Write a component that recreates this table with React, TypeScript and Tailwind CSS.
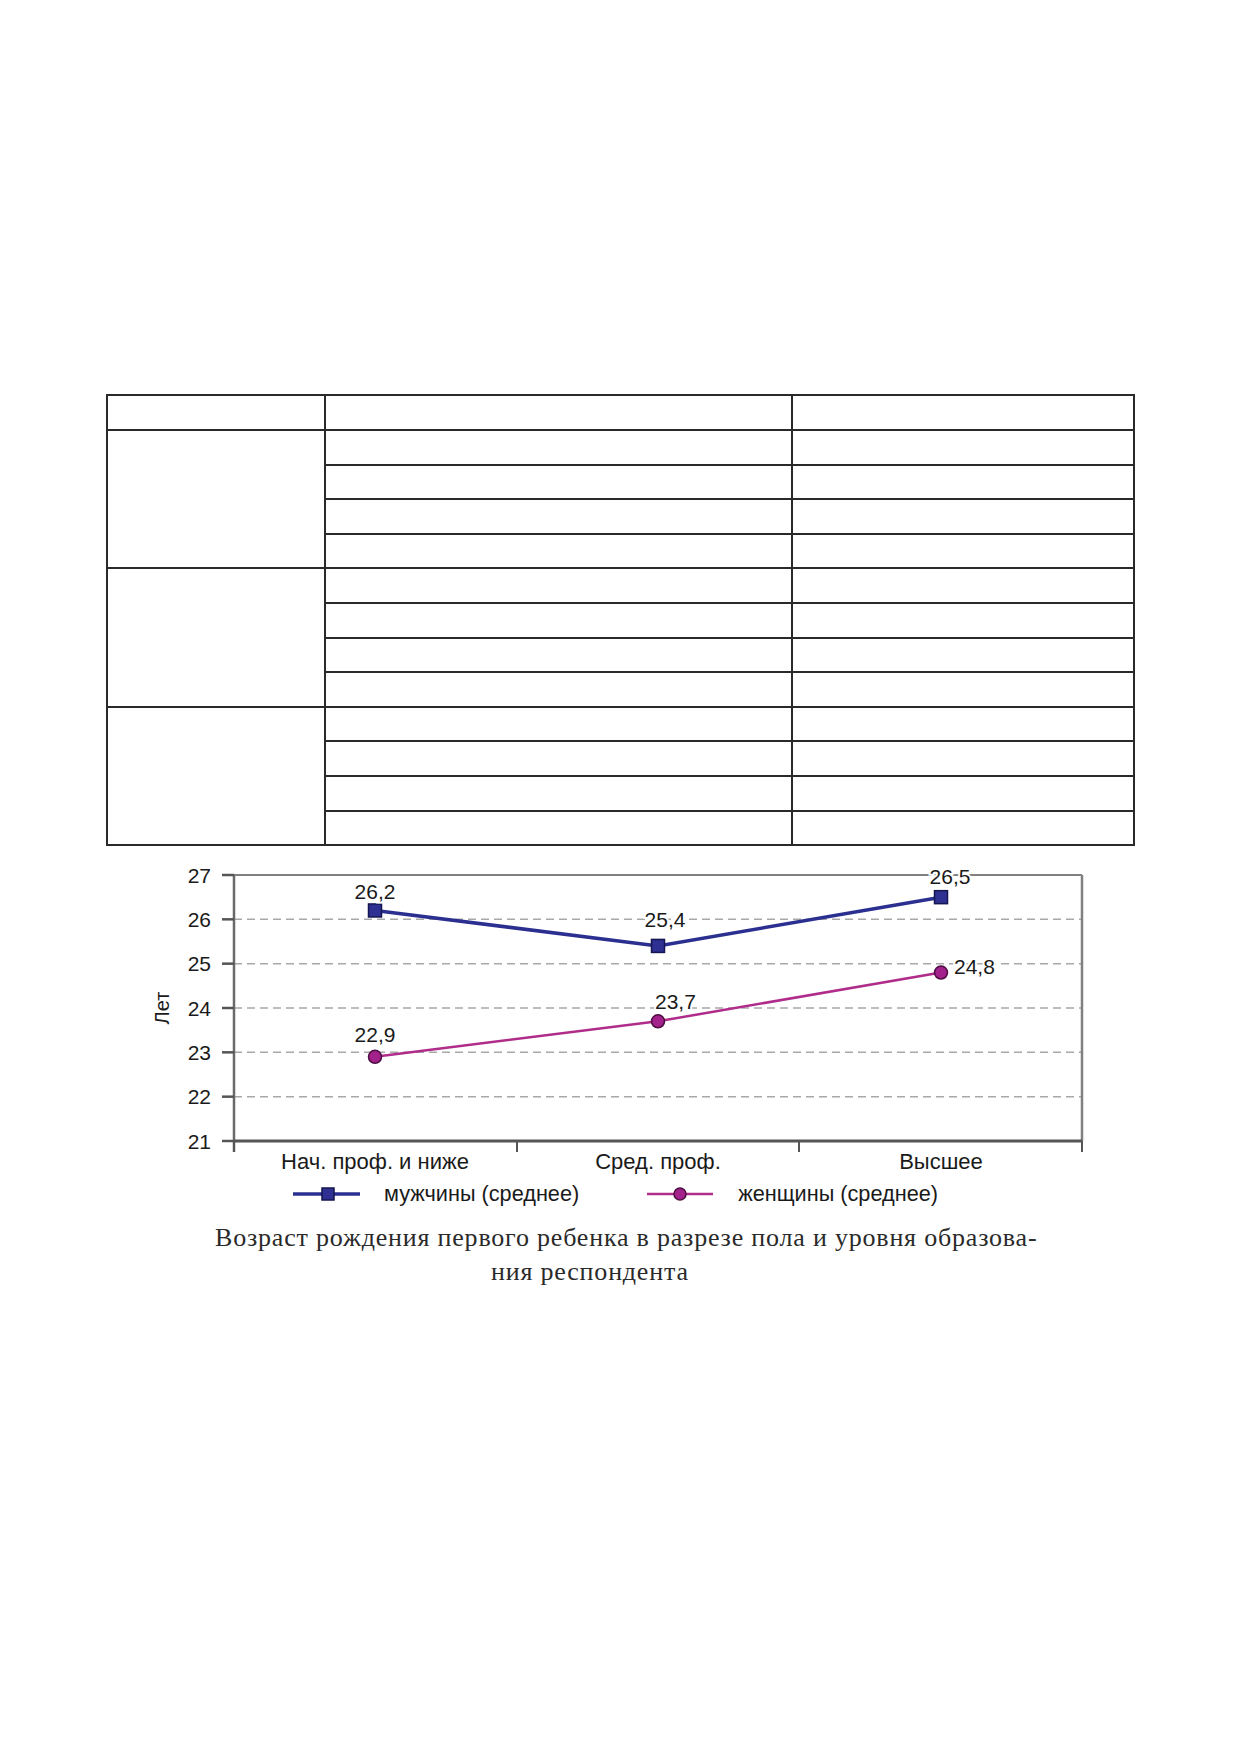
import React from 'react';

// chart geometry (svg coords; svg sits at page x=130, y~847)
const PLOT = { left: 104, right: 952, top: 26, bottom: 292 };
const yOf = (v: number) => PLOT.top + (27 - v) * ((PLOT.bottom - PLOT.top) / 6);
const xs = [245, 528, 811];

const male = [26.2, 25.4, 26.5];
const female = [22.9, 23.7, 24.8];

const categories = ['Нач. проф. и ниже', 'Сред. проф.', 'Высшее'];

const BLUE = '#2b3090';
const MAGENTA = '#b02c8a';

const groups = [0, 1, 2];
const subRows = [0, 1, 2, 3];

const FONT = { fontFamily: '"Liberation Sans", Arial, sans-serif' };

const Chart: React.FC = () => {
  const ticksY = [21, 22, 23, 24, 25, 26, 27];
  const ticksX = [104, 387, 669, 952];
  const fmt = (v: number) => v.toFixed(1).replace('.', ',');

  const maleLabels = [
    { x: 245, y: 50, anchor: 'middle' as const },
    { x: 535, y: 78, anchor: 'middle' as const },
    { x: 820, y: 35, anchor: 'middle' as const },
  ];
  const femaleLabels = [
    { x: 245, y: 193, anchor: 'middle' as const },
    { x: 525, y: 160, anchor: 'start' as const },
    { x: 824, y: 125, anchor: 'start' as const },
  ];

  return (
    <svg width={970} height={330} viewBox="0 0 970 330" className="block" style={FONT}>
      {/* grid */}
      {[22, 23, 24, 25, 26].map((v) => (
        <line
          key={v}
          x1={PLOT.left}
          x2={PLOT.right}
          y1={yOf(v)}
          y2={yOf(v)}
          stroke="#a8a8a8"
          strokeWidth={1.5}
          strokeDasharray="8 5"
        />
      ))}
      {/* frame top + right */}
      <line x1={PLOT.left} x2={PLOT.right} y1={PLOT.top} y2={PLOT.top} stroke="#808080" strokeWidth={2} />
      <line x1={PLOT.right} x2={PLOT.right} y1={PLOT.top} y2={PLOT.bottom} stroke="#808080" strokeWidth={2.5} />
      {/* axes */}
      <line x1={PLOT.left} x2={PLOT.left} y1={PLOT.top} y2={PLOT.bottom + 11} stroke="#6a6a6a" strokeWidth={2.5} />
      <line x1={PLOT.left} x2={PLOT.right} y1={PLOT.bottom} y2={PLOT.bottom} stroke="#555" strokeWidth={3} />
      {ticksY.map((v) => (
        <g key={v}>
          <line x1={92} x2={PLOT.left} y1={yOf(v)} y2={yOf(v)} stroke="#555" strokeWidth={2.5} />
          <text x={81} y={yOf(v) + 7.5} textAnchor="end" fontSize={21} fill="#1a1a1a">
            {v}
          </text>
        </g>
      ))}
      {ticksX.map((x) => (
        <line key={x} x1={x} x2={x} y1={PLOT.bottom} y2={PLOT.bottom + 11} stroke="#555" strokeWidth={2} />
      ))}
      {categories.map((c, i) => (
        <text key={c} x={xs[i]} y={320} textAnchor="middle" fontSize={22} fill="#1a1a1a">
          {c}
        </text>
      ))}
      <text x={39} y={159} transform="rotate(-90 39 159)" textAnchor="middle" fontSize={20} fill="#1a1a1a">
        Лет
      </text>

      {/* series */}
      <polyline
        points={male.map((v, i) => `${xs[i]},${yOf(v)}`).join(' ')}
        fill="none"
        stroke={BLUE}
        strokeWidth={3.5}
      />
      <polyline
        points={female.map((v, i) => `${xs[i]},${yOf(v)}`).join(' ')}
        fill="none"
        stroke={MAGENTA}
        strokeWidth={2.5}
      />
      {male.map((v, i) => (
        <rect
          key={i}
          x={xs[i] - 6.5}
          y={yOf(v) - 6.5}
          width={13}
          height={13}
          fill="#2e3192"
          stroke="#151550"
          strokeWidth={1.5}
        />
      ))}
      {female.map((v, i) => (
        <circle key={i} cx={xs[i]} cy={yOf(v)} r={6.5} fill="#a3218b" stroke="#4d0d40" strokeWidth={1.5} />
      ))}

      {/* value labels */}
      {male.map((v, i) => (
        <text
          key={i}
          x={maleLabels[i].x}
          y={maleLabels[i].y}
          textAnchor={maleLabels[i].anchor}
          fontSize={21}
          fill="#1a1a1a"
          stroke="#fff"
          strokeWidth={4}
          paintOrder="stroke"
        >
          {fmt(v)}
        </text>
      ))}
      {female.map((v, i) => (
        <text
          key={i}
          x={femaleLabels[i].x}
          y={femaleLabels[i].y}
          textAnchor={femaleLabels[i].anchor}
          fontSize={21}
          fill="#1a1a1a"
          stroke="#fff"
          strokeWidth={4}
          paintOrder="stroke"
        >
          {fmt(v)}
        </text>
      ))}
    </svg>
  );
};

const LegendItem: React.FC<{ kind: 'square' | 'circle'; label: string }> = ({ kind, label }) => (
  <div className="flex items-center gap-[24px]">
    <svg width={67} height={16} viewBox="0 0 67 16" className="block">
      {kind === 'square' ? (
        <>
          <line x1={0} x2={67} y1={8} y2={8} stroke={BLUE} strokeWidth={3.5} />
          <rect x={29} y={2} width={12} height={12} fill="#2e3192" stroke="#151550" strokeWidth={1.5} />
        </>
      ) : (
        <>
          <line x1={0} x2={66} y1={8} y2={8} stroke={MAGENTA} strokeWidth={2.5} />
          <circle cx={33} cy={8} r={6} fill="#a3218b" stroke="#4d0d40" strokeWidth={1.5} />
        </>
      )}
    </svg>
    <span className="text-[21.7px] leading-none text-[#1a1a1a]" style={FONT}>
      {label}
    </span>
  </div>
);

export default function App() {
  return (
    <div className="w-[1240px] min-h-[1754px] bg-white pt-[394px]">
      {/* empty table */}
      <table className="ml-[106px] w-[1027px] table-fixed border-collapse">
        <colgroup>
          <col className="w-[218px]" />
          <col className="w-[467px]" />
          <col className="w-[342px]" />
        </colgroup>
        <tbody>
          <tr className="h-[35px]">
            <td className="border-2 border-[#2a2a2a]" />
            <td className="border-2 border-[#2a2a2a]" />
            <td className="border-2 border-[#2a2a2a]" />
          </tr>
          {groups.map((g) =>
            subRows.map((r) => (
              <tr key={`${g}-${r}`} className="h-[34.6px]">
                {r === 0 && <td rowSpan={4} className="border-2 border-[#2a2a2a]" />}
                <td className="border-2 border-[#2a2a2a]" />
                <td className="border-2 border-[#2a2a2a]" />
              </tr>
            ))
          )}
        </tbody>
      </table>

      {/* chart */}
      <div className="ml-[130px] mt-[3px]">
        <Chart />
      </div>

      {/* legend */}
      <div className="ml-[293px] flex h-[30px] items-center gap-[68px]">
        <LegendItem kind="square" label="мужчины (среднее)" />
        <LegendItem kind="circle" label="женщины (среднее)" />
      </div>

      {/* caption */}
      <div
        className="ml-[215px] mt-[12px] text-[26px] leading-[34px] tracking-[0.8px] text-[#2a2a2a]"
        style={{ fontFamily: '"Liberation Serif", "Times New Roman", serif' }}
      >
        <p>Возраст рождения первого ребенка в разрезе пола и уровня образова-</p>
        <p className="pl-[276px]">ния респондента</p>
      </div>
    </div>
  );
}
